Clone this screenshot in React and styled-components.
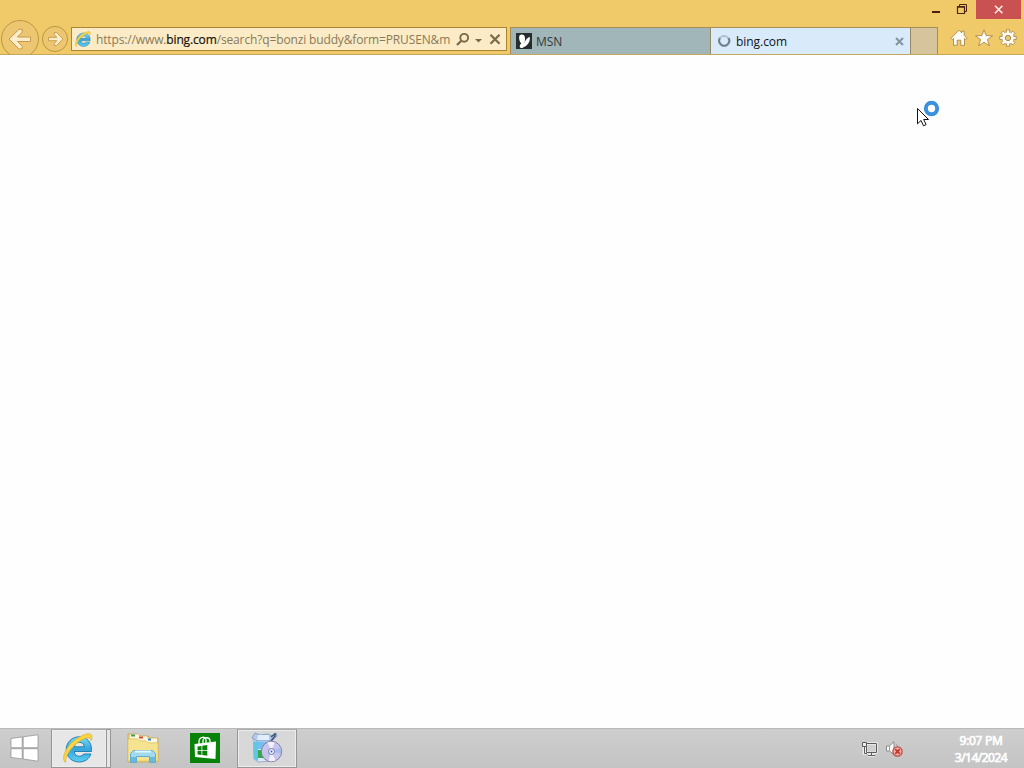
import styled, { createGlobalStyle } from "styled-components";

const App = () => {
  return (
    <>
      <GlobalStyle />
      <Screen>
        <Browser>
          <TitleBar>
            <WindowButton $width={26} aria-label="Minimize">
              <MinimizeIcon />
            </WindowButton>
            <WindowButton $width={27} aria-label="Restore">
              <RestoreIcon />
            </WindowButton>
            <WindowButton $width={45} $close aria-label="Close">
              <CloseIcon />
            </WindowButton>
          </TitleBar>
          <NavRow>
            <NavButtons>
              <BackIcon />
              <ForwardIcon />
            </NavButtons>
            <AddressBar>
              <ExplorerLogo size={18} id="small" />
              <Address>
                https://www.<Domain>bing.com</Domain>/search?q=bonzi
                buddy&amp;form=PRUSEN&amp;m
              </Address>
              <AddressIcons />
            </AddressBar>
            <Tabs>
              <Tab>
                <MsnIcon />
                <TabTitle>MSN</TabTitle>
              </Tab>
              <Tab $active>
                <SpinnerIcon />
                <TabTitle $active>bing.com</TabTitle>
                <TabCloseIcon />
              </Tab>
              <NewTab aria-label="New tab" />
            </Tabs>
            <Tools>
              <HomeIcon />
              <StarIcon />
              <GearIcon />
            </Tools>
          </NavRow>
        </Browser>
        <Page />
        <Taskbar>
          <StartButton aria-label="Start">
            <WindowsLogo />
          </StartButton>
          <TaskGroup>
            <TaskButton $width={56} $current>
              <ExplorerLogo size={34} id="large" />
            </TaskButton>
            <StackEdge />
          </TaskGroup>
          <TaskButton $width={64} $plain>
            <FolderIcon />
          </TaskButton>
          <TaskButton $width={60} $plain>
            <StoreIcon />
          </TaskButton>
          <TaskGap />
          <TaskButton $width={60}>
            <InstallerIcon />
          </TaskButton>
          <Tray>
            <NetworkIcon />
            <VolumeIcon />
          </Tray>
          <Clock>
            <ClockLine $spacing={-0.3}>9:07 PM</ClockLine>
            <ClockLine $spacing={-0.5}>3/14/2024</ClockLine>
          </Clock>
        </Taskbar>
        <Cursor />
      </Screen>
    </>
  );
};
export default App;

//icons

const MinimizeIcon = () => (
  <svg width="26" height="20">
    <path d="M9 12h8" stroke="#4b1c10" strokeWidth="2" />
  </svg>
);

const RestoreIcon = () => (
  <svg width="27" height="20" fill="none" stroke="#4b2510">
    <path d="M8.500 6.500h7v7h-7zM8 7.200h8" strokeWidth="1.200" />
    <path d="M10.500 6V4.500h7v7H16" />
  </svg>
);

const CloseIcon = () => (
  <svg width="45" height="19">
    <path d="M19 5.800l7.400 7.400M26.400 5.800L19 13.200" stroke="#fff0ea" strokeWidth="1.600" />
  </svg>
);

const BackIcon = () => (
  <svg width="39" height="34" viewBox="0 0 39 34">
    <circle cx="20" cy="19" r="18.500" fill="#edc671" stroke="#bf9640" />
    <path
      d="M9 19L19 9.300h3.200v2.800L17.500 17H30.500v4.500H17.500l4.700 4.600V29H19z"
      fill="#fcecca"
      stroke="#c59a4b"
    />
  </svg>
);

const ForwardIcon = () => (
  <svg width="30" height="34" viewBox="0 0 30 34">
    <circle cx="16" cy="19" r="12.600" fill="#edc671" stroke="#bf9640" />
    <path
      d="M24 19l-6.400-6.500h-2.300v2.200l2.500 2.700H9.500v3.300h8.300l-2.500 2.700v2.100h2.300z"
      fill="#fcecca"
      stroke="#c59a4b"
      strokeWidth=".9"
    />
  </svg>
);

const ExplorerLogo = ({ size, id }) => (
  <svg width={size} height={size} viewBox="0 0 34 34" fill="none">
    <defs>
      <linearGradient id={id} x1="0" y1="0" x2="0" y2="1">
        <stop offset="0" stopColor="#7fdcf5" />
        <stop offset="0.5" stopColor="#35a5dc" />
        <stop offset="1" stopColor="#5ccff2" />
      </linearGradient>
    </defs>
    <path
      d="M30.500 20.500H13.200c.3 3 2.200 4.700 5.100 4.700 2 0 3.500-.8 4.500-2.200h7.200c-1.800 5-6.200 8-11.800 8C11 31 5.200 25.800 5.200 18.500S11 5.800 18.200 5.800c7.400 0 12.300 5.100 12.300 12.700zM13.300 15.800h10c-.4-2.900-2.200-4.500-5-4.500-2.700 0-4.500 1.600-5 4.500z"
      fill={`url(#${id})`}
      stroke="#1976ae"
      strokeWidth=".9"
    />
    <path
      d="M4.500 31.500C-1 27 6 13.500 16 7.500 23 3 30.500.5 31 5.500c.1 1.500-.4 3-1 4.200.2-4-3.800-3.700-10-.3C12 14 4 24 4.500 31.500z"
      fill="#fad441"
      stroke="#d5a925"
      strokeWidth=".6"
    />
  </svg>
);

const AddressIcons = () => (
  <svg width="52" height="22" fill="none" stroke="#796b47">
    <circle cx="11.200" cy="9.800" r="3.900" strokeWidth="1.900" />
    <path d="M8.300 12.800L4 17" strokeWidth="2.300" />
    <path d="M22 11h7l-3.500 3.500z" fill="#796b47" stroke="none" />
    <path d="M37.500 6.800l9 9M46.500 6.800l-9 9" strokeWidth="2.200" />
  </svg>
);

const MsnIcon = () => (
  <svg width="16" height="16">
    <path d="M0 0h16v16H0z" fill="#252d2d" />
    <path
      d="M3.300 3C4 1.300 6.500 1 8 2.300c1.200 1.300 1.200 4 .8 6.200L8 13.500c-.8 2-3.500 2-4.200.5-.3-1.400.3-2.500 1.500-3.400C3.500 8.500 2.700 5.500 3.300 3z"
      fill="#fff"
    />
    <path d="M8 10.500c1.300-3.200 3.300-6 5.700-6.800.7 3-.5 6.300-2.700 8.300-1 1-2 1.700-3.500 2z" fill="#fff" />
  </svg>
);

const SpinnerIcon = () => (
  <svg width="16" height="16" fill="none" strokeWidth="2">
    <circle cx="8" cy="8" r="5" stroke="#b4c1cd" />
    <path d="M4 5a5 5 0 1 0 8.500 0" stroke="#71808c" />
  </svg>
);

const TabCloseIcon = () => (
  <svg width="9" height="9">
    <path d="M1 1l7 7M8 1L1 8" stroke="#8395a0" strokeWidth="2" />
  </svg>
);

const HomeIcon = () => (
  <svg width="18" height="18">
    <path
      d="M1 9.300L9 1.200l2.700 2.700V2.200h2.500v4.200L17 9.300l-1.200 1.300-1.300-1.200v6.900h-3.700v-5.100H7.200v5.100H3.500V9.400l-1.300 1.200z"
      fill="#fffdf6"
      stroke="#a07c42"
      strokeWidth=".8"
    />
  </svg>
);

const StarIcon = () => (
  <svg width="18" height="18">
    <path
      d="M9 .8l2.100 5.800 6.400.2-5.100 3.800 1.900 6.200L9 13.200l-5.300 3.600 1.900-6.200L.5 6.800l6.400-.2z"
      fill="#fffdf6"
      stroke="#a07c42"
      strokeWidth=".8"
    />
  </svg>
);

const GearIcon = () => (
  <svg width="18" height="18">
    <g stroke="#a07c42" strokeWidth=".8" fill="#fffdf6">
      {[0, 45, 90, 135].map((turn) => (
        <path
          key={turn}
          d="M7.400.8h3.200v16.400H7.400z"
          transform={`rotate(${turn} 9 9)`}
        />
      ))}
    </g>
    <circle cx="9" cy="9" r="5.700" fill="#fffdf6" />
    <circle cx="9" cy="9" r="2.700" fill="#e8c67b" stroke="#a58249" strokeWidth=".9" />
  </svg>
);

const WindowsLogo = () => (
  <svg width="30" height="30">
    <path
      d="M2 4.500l11.200-1.600v10.800H2zM14.200 2.800L29 .8v12.900H14.200zM2 14.700h11.200v10.200L2 23.400zM14.200 14.700H29v12.500L14.200 25z"
      fill="#fff"
      stroke="#8c8c8c"
      strokeWidth=".7"
    />
  </svg>
);

const FolderIcon = () => (
  <svg width="32" height="32">
    <path d="M1 2h10l2 2h8l2 2h8v24H1z" fill="#ecd276" stroke="#cbad58" />
    <path d="M3 2.500h9v4H3zM11 4.500h9v4h-9zM19 6.500h11v4H19z" fill="#fff9e3" />
    <path d="M4 2.500h4v2H4z" fill="#3d9b55" />
    <path d="M12 4.500h4v2h-4z" fill="#d34c35" />
    <path d="M21 6.500h3v2h-3z" fill="#367ac0" />
    <path d="M1 7h10l2 2h6l2 2h10v18H1z" fill="#f6e38f" stroke="#ddc069" strokeWidth=".7" />
    <path
      d="M3.500 30.500v-9l3-3h19l3 3v9h-6v-6h-13v6z"
      fill="#a2d9ef"
      stroke="#5faed1"
    />
    <path d="M8 19.500h16" stroke="#e3f8ff" strokeWidth="2" />
    <path d="M4 25h5v5H4zM23 25h5v5h-5z" fill="#69b9df" />
  </svg>
);

const StoreIcon = () => (
  <svg width="30" height="30">
    <path d="M0 0h30v30H0z" fill="#088208" />
    <path d="M4.500 11L26 8.500 25.500 26 5 24z" fill="#fff" />
    <path
      d="M9 11V8.500c0-4.800 7-6 7-1.200V10M13 10V7.500c0-3.700 7-3.800 7 .5v1"
      fill="none"
      stroke="#fff"
      strokeWidth="1.300"
    />
    <path
      d="M7.500 13.500l4-.5v4h-4zM12.300 12.800l5-.7V17h-5zM7.500 17.800h4V22l-4-.5zM12.300 17.800h5v5l-5-.7z"
      fill="#088208"
    />
  </svg>
);

const InstallerIcon = () => (
  <svg width="34" height="34">
    <path d="M4 8L22 6l-1 24-13 1-4-3z" fill="#dbe8f7" stroke="#8599be" strokeWidth=".7" />
    <path d="M5 2l5 2 8-1 3 2 5-3 1 3-5 5H7L2 7z" fill="#b5c8ee" stroke="#718bb5" strokeWidth=".7" />
    <path d="M21 6l4-3M25 2v3l-4 5" fill="none" stroke="#435575" strokeWidth="1.500" />
    <path d="M8 4h11v5H7z" fill="#dff0fc" />
    <path d="M3 11l5-1v20l-4-2z" fill="#61c5e5" />
    <path d="M8 11h9v7H8z" fill="#73bff0" />
    <path d="M8 19h7v8H8z" fill="#35a84d" />
    <path d="M12 17l4-3v9h-4z" fill="#cf814d" />
    <circle cx="21.500" cy="20.500" r="10.200" fill="#c6c5eb" stroke="#8080a8" />
    <path d="M21.500 20.500l-4-9a10 10 0 0 1 7-.3zM21.500 20.500l4 9a10 10 0 0 1-7 .3z" fill="#f3effe" />
    <path d="M21.500 20.500l9-4a10 10 0 0 1 .5 6z" fill="#a9b9ee" />
    <circle cx="21.500" cy="20.500" r="3" fill="#edf1fc" stroke="#7178b7" />
    <circle cx="21.500" cy="20.500" r="1" fill="#555b98" />
  </svg>
);

const NetworkIcon = () => (
  <svg width="17" height="18" fill="none">
    <g stroke="#f0f0f0" strokeWidth="2.500">
      <path d="M5.500 3.500h10v9h-10zM10.500 13v3M7 15.500h7M3 6.500v7h2" />
    </g>
    <g stroke="#5c5c5c">
      <path d="M5.500 3.500h10v9h-10zM10.500 13v2.500M7 15.500h7M3.500 6.500v7h2.500" />
      <path d="M1.500 2.500h4v4h-4z" fill="#eee" />
    </g>
    <path d="M6.500 5h8v6.500h-8z" fill="#cfcfcf" />
  </svg>
);

const VolumeIcon = () => (
  <svg width="18" height="18">
    <path d="M1.500 6h3L9 1.700v13L4.500 11h-3z" fill="#fff" stroke="#8a8a8a" />
    <path d="M4.500 6v5M11 4c1 1 1.500 2 1.500 4" fill="none" stroke="#999" />
    <circle cx="12.500" cy="11.500" r="4.600" fill="#e9b5ad" stroke="#c4453b" strokeWidth="1.300" />
    <path d="M10.200 9.200l4.600 4.600M14.800 9.200l-4.600 4.600" stroke="#c4372d" strokeWidth="1.800" />
  </svg>
);

const Cursor = () => (
  <Pointer width="26" height="30">
    <circle cx="15.500" cy="9.500" r="5.700" fill="#fff" stroke="#3a90dc" strokeWidth="4" />
    <path
      d="M1.500 9.500v15.300L5 21.500l2.500 5.300 2.600-1.200-2.400-5.100h4.800z"
      fill="#fff"
      stroke="#111"
    />
  </Pointer>
);

//styled-components

const GlobalStyle = createGlobalStyle`
  * {
    box-sizing: border-box;
  }
  body {
    margin: 0;
    overflow: hidden;
    font-family: "Open Sans", "Noto Sans", sans-serif;
    font-size: 12px;
  }
  svg {
    display: block;
    flex-shrink: 0;
  }
`;

const Screen = styled.div`
  position: relative;
  display: flex;
  flex-direction: column;
  width: 1024px;
  height: 768px;
  background-color: #fefefe;
`;

const Browser = styled.header`
  height: 55px;
  background-color: #f0c968;
  border-bottom: 1px solid #c7a85b;
`;

const TitleBar = styled.div`
  display: flex;
  justify-content: flex-end;
  height: 20px;
  padding-right: 3px;
`;

const WindowButton = styled.button`
  width: ${({ $width }) => $width}px;
  height: ${({ $close }) => ($close ? "19px" : "20px")};
  padding: 0;
  border: none;
  background-color: ${({ $close }) => ($close ? "#ca5152" : "transparent")};
`;

const NavRow = styled.nav`
  display: flex;
  height: 34px;
`;

const NavButtons = styled.div`
  display: flex;
  width: 71px;
`;

const AddressBar = styled.div`
  display: flex;
  align-items: center;
  width: 436px;
  height: 24px;
  margin: 7px 3px 0 0;
  padding-left: 2px;
  border: 1px solid #ad8532;
  background-color: #fbebc6;
`;

const Address = styled.div`
  width: 361px;
  padding: 2px 0 0 4px;
  color: #8a7a58;
  line-height: 22px;
  letter-spacing: -0.14px;
  white-space: nowrap;
`;

const Domain = styled.span`
  color: #17130a;
  -webkit-text-stroke: 0.2px #17130a;
`;

const Tabs = styled.div`
  display: flex;
  height: 27px;
  margin-top: 7px;
  border: 1px solid #a78d56;
  border-width: 1px 0 0 1px;
`;

const Tab = styled.div`
  display: flex;
  align-items: center;
  width: 200px;
  padding: 0 6px 0 5px;
  border-right: 1px solid #968966;
  background-color: ${({ $active }) => ($active ? "#d9eafb" : "#a1b6b8")};
`;

const TabTitle = styled.span`
  flex: 1;
  padding: 2px 0 0 4px;
  line-height: 20px;
  letter-spacing: -0.05px;
  color: ${({ $active }) => ($active ? "#101418" : "#303b3c")};
`;

const NewTab = styled.button`
  width: 27px;
  padding: 0;
  border: none;
  border-right: 1px solid #a88c53;
  background-color: #d6c49c;
`;

const Tools = styled.div`
  display: flex;
  gap: 6.5px;
  padding: 9px 0 0 12px;
`;

const Page = styled.main`
  flex: 1;
  background-color: #fefefe;
`;

const Taskbar = styled.footer`
  display: flex;
  height: 40px;
  border-top: 1px solid #b9b9b9;
  background: linear-gradient(#cecece, #c4c4c4);
`;

const StartButton = styled.button`
  width: 51px;
  padding: 0 0 0 9px;
  border: none;
  background: transparent;
`;

const TaskGroup = styled.div`
  display: flex;
  width: 60px;
`;

const TaskButton = styled.div`
  display: flex;
  align-items: center;
  justify-content: center;
  width: ${({ $width }) => $width}px;
  padding: 0 ${({ $current }) => ($current ? 3 : 1)}px 1px 0;
  border: 1px solid ${({ $plain }) => ($plain ? "transparent" : "#969696")};
  border-top-color: ${({ $plain }) => ($plain ? "transparent" : "#aaa")};
  box-shadow: ${({ $plain }) => ($plain ? "none" : "inset 0 0 0 1px #ededed")};
  background-color: ${({ $plain, $current }) =>
    $plain ? "transparent" : $current ? "#e7e7e7" : "#d8d8d8"};
`;

const StackEdge = styled.div`
  width: 4px;
  border: 1px solid #969696;
  border-left: none;
  background-color: #e7e7e7;
`;

const TaskGap = styled.div`
  width: 2px;
`;

const Tray = styled.div`
  display: flex;
  align-items: center;
  gap: 7px;
  margin-left: auto;
`;

const Clock = styled.div`
  width: 121px;
  padding: 3px 0 0 35px;
  text-align: center;
  color: #fff;
`;

const ClockLine = styled.div`
  height: 17px;
  line-height: 17px;
  letter-spacing: ${({ $spacing }) => $spacing}px;
  -webkit-text-stroke: 0.7px #fff;
`;

const Pointer = styled.svg`
  position: absolute;
  left: 916px;
  top: 99px;
`;
